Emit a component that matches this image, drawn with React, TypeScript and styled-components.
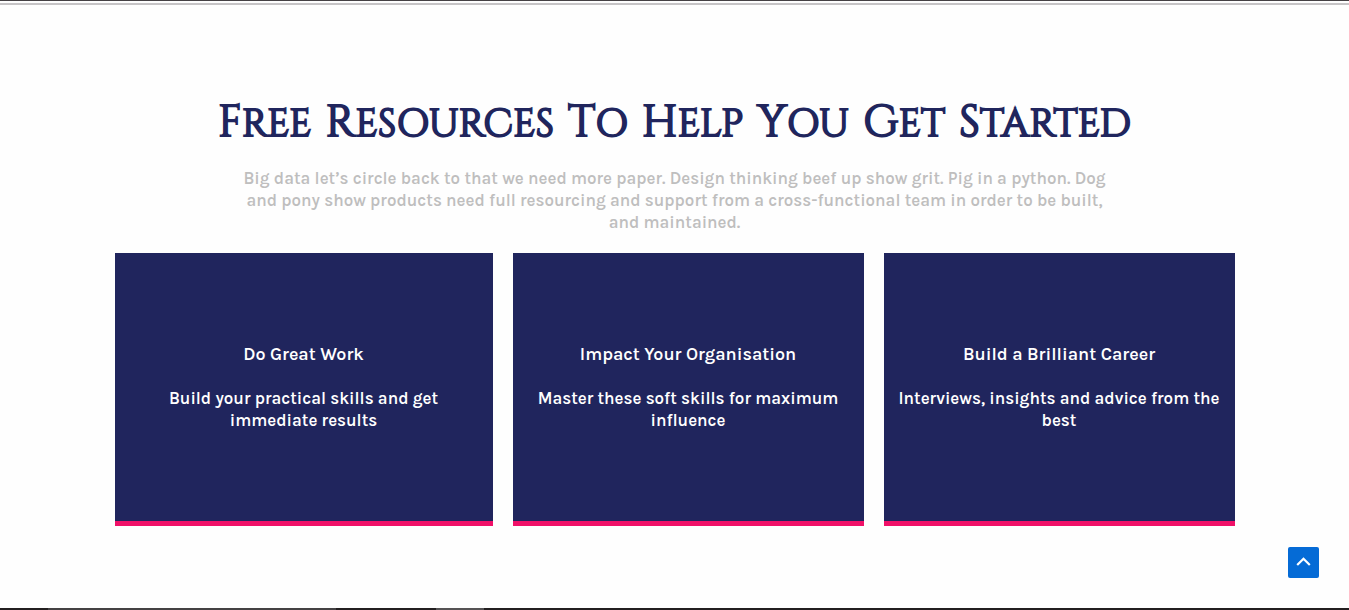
import React from 'react';
import styled, { createGlobalStyle } from 'styled-components';

const GlobalStyle = createGlobalStyle`
  *, *::before, *::after {
    box-sizing: border-box;
  }

  body {
    margin: 0;
    background: #fefefe;
    font-family: Karla, Inter, sans-serif;
  }
`;

const Page = styled.div`
  display: flex;
  flex-direction: column;
  min-height: 100vh;
`;

const TopRule = styled.div`
  height: 5px;
  border-top: 1px solid #454144;
  border-bottom: 2px solid #c6c4c6;
`;

const Section = styled.main`
  flex: 1;
  padding: 90px 20px 80px;
`;

const Title = styled.h2`
  display: flex;
  flex-wrap: wrap;
  justify-content: center;
  column-gap: 14px;
  margin: 0 0 16px;
  color: #20255d;
  font-family: 'Trajan Pro', Cinzel, 'Liberation Serif', serif;
  font-size: 39px;
  font-weight: 400;
  line-height: 56px;
  text-transform: uppercase;
  -webkit-text-stroke: 2px #20255d;
`;

const Word = styled.span`
  display: block;
  height: 56px;

  &::first-letter {
    font-size: 44px;
    line-height: 56px;
  }
`;

const Intro = styled.p`
  max-width: 880px;
  margin: 0 auto 20px;
  color: #bfbebe;
  font-size: 17px;
  font-weight: 600;
  line-height: 22px;
  text-align: center;
`;

const Cards = styled.div`
  display: grid;
  grid-template-columns: 378fr 351fr 351fr;
  gap: 20px;
  max-width: 1120px;
  margin: 0 auto;
`;

const Card = styled.article`
  display: flex;
  flex-direction: column;
  gap: 22px;
  padding: 90px 12px;
  border-bottom: 5px solid #f01068;
  background: #20255d;
  color: #fff;
  text-align: center;
`;

const CardTitle = styled.h3`
  margin: 0;
  font-size: 18px;
  font-weight: 600;
  line-height: 22px;
`;

const CardText = styled.p`
  max-width: 328px;
  margin: 0 auto;
  font-size: 17px;
  font-weight: 600;
  line-height: 22px;
`;

const BackToTop = styled.button`
  position: fixed;
  right: 30px;
  bottom: 32px;
  display: grid;
  place-items: center;
  width: 31px;
  height: 31px;
  padding: 0;
  border: 0;
  border-radius: 2px;
  background: #056bd6;
  color: #fff;
  cursor: pointer;
`;

const Footer = styled.footer`
  display: flex;
  height: 2px;
  background: #231f20;
`;

const FooterSegment = styled.div<{ $width: number; $color: string }>`
  width: ${({ $width }) => $width}px;
  background: ${({ $color }) => $color};
`;

const title = ['Free', 'Resources', 'To', 'Help', 'You', 'Get', 'Started'];

const resources = [
  { title: 'Do Great Work', text: 'Build your practical skills and get immediate results' },
  { title: 'Impact Your Organisation', text: 'Master these soft skills for maximum influence' },
  { title: 'Build a Brilliant Career', text: 'Interviews, insights and advice from the best' },
];

export default function App() {
  return (
    <Page>
      <GlobalStyle />
      <TopRule />
      <Section>
        <Title>
          {title.map((word) => (
            <Word key={word}>{word} </Word>
          ))}
        </Title>
        <Intro>
          Big data let’s circle back to that we need more paper. Design thinking beef up show
          grit. Pig in a python. Dog and pony show products need full resourcing and support from
          a cross-functional team in order to be built, and maintained.
        </Intro>
        <Cards>
          {resources.map((resource) => (
            <Card key={resource.title}>
              <CardTitle>{resource.title}</CardTitle>
              <CardText>{resource.text}</CardText>
            </Card>
          ))}
        </Cards>
      </Section>
      <Footer>
        <FooterSegment $width={48} $color="#231f20" />
        <FooterSegment $width={288} $color="#444143" />
        <FooterSegment $width={100} $color="#231f20" />
        <FooterSegment $width={48} $color="#555354" />
      </Footer>
      <BackToTop
        type="button"
        aria-label="Back to top"
        onClick={() => window.scrollTo({ top: 0, behavior: 'smooth' })}
      >
        <svg width="15" height="11" viewBox="0 0 15 11" fill="none" aria-hidden="true">
          <path d="M1.2 8 7.5 1.8 13.8 8" stroke="currentColor" strokeWidth="2.2" />
        </svg>
      </BackToTop>
    </Page>
  );
}
